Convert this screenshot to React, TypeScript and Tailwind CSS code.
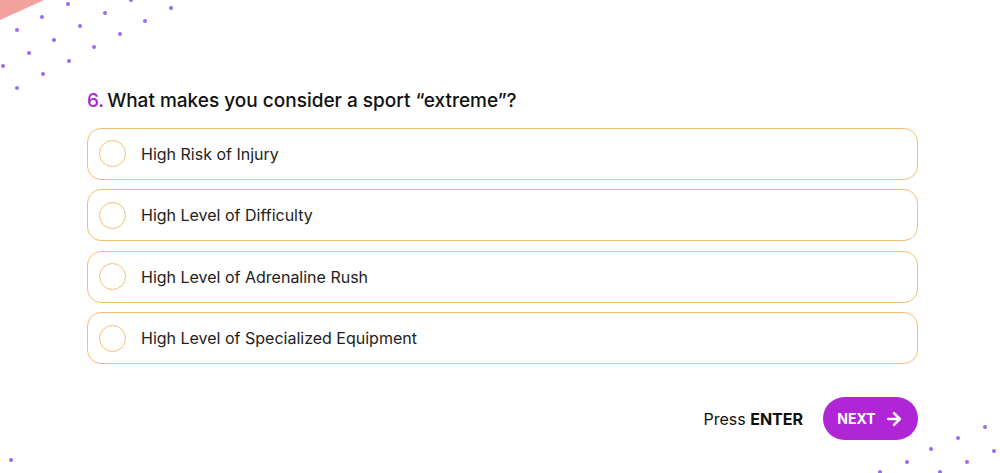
import { ArrowRight } from "lucide-react";

const OPTIONS = [
  "High Risk of Injury",
  "High Level of Difficulty",
  "High Level of Adrenaline Rush",
  "High Level of Specialized Equipment",
];

// decorative dot scatter, picture coordinates
const DOTS_TL: [number, number][] = [
  [68, 4], [131, 0], [171, 8], [42, 17], [105, 13], [145, 21], [17, 30], [80, 26],
  [120, 34], [54, 40], [94, 47], [29, 53], [3, 66], [69, 61], [43, 74], [17, 88],
];
const DOTS_BR: [number, number][] = [
  [985, 427], [958, 438], [931, 449], [907, 462], [880, 472], [994, 451], [967, 462], [940, 472],
];

function Dot({ x, y }: { x: number; y: number }) {
  return (
    <span
      className="absolute h-[4px] w-[4px] rounded-full bg-[#9a6cf0]"
      style={{ left: x - 2, top: y - 2 }}
    />
  );
}

export default function App() {
  return (
    <div
      className="relative h-[473px] w-[1000px] overflow-hidden bg-white"
      style={{ fontFamily: "Inter, 'Open Sans', sans-serif" }}
    >
      {/* corner decoration */}
      <svg className="absolute top-0 left-0" width="50" height="25" viewBox="0 0 50 25">
        <polygon points="0,0 44,0 0,20" fill="#f2a19d" />
      </svg>
      {DOTS_TL.map(([x, y], i) => (
        <Dot key={"a" + i} x={x} y={y} />
      ))}
      {DOTS_BR.map(([x, y], i) => (
        <Dot key={"b" + i} x={x} y={y} />
      ))}
      <Dot x={11} y={460} />

      <div className="flex flex-col px-[87px] pt-[87px]">
        <h2 className="flex items-baseline text-[19px] font-medium text-[#111]">
          <span className="mr-[3px] text-[#a61fd6]">6.</span>
          What makes you consider a sport “extreme”?
        </h2>

        <div className="mt-[12px] flex flex-col gap-[9.5px]">
          {OPTIONS.map((opt) => (
            <button
              key={opt}
              className="flex h-[52px] w-[831px] items-center rounded-[14px] border-[1.5px] border-[#f3c072] pl-[11px] text-left"
            >
              <span className="h-[27px] w-[27px] shrink-0 rounded-full border-[1.5px] border-[#f3c072]" />
              <span className="ml-[15px] text-[16px] text-[#222]">{opt}</span>
            </button>
          ))}
        </div>

        <div className="mt-[33px] flex w-[831px] items-center justify-end">
          <span className="text-[16px] text-[#111]">
            Press <b className="font-bold">ENTER</b>
          </span>
          <button className="ml-[20px] flex h-[43px] w-[95px] items-center justify-center gap-[8px] rounded-full bg-[#b026d6] text-[14px] font-bold text-white">
            NEXT
            <ArrowRight className="h-[20px] w-[20px]" strokeWidth={3} />
          </button>
        </div>
      </div>
    </div>
  );
}
